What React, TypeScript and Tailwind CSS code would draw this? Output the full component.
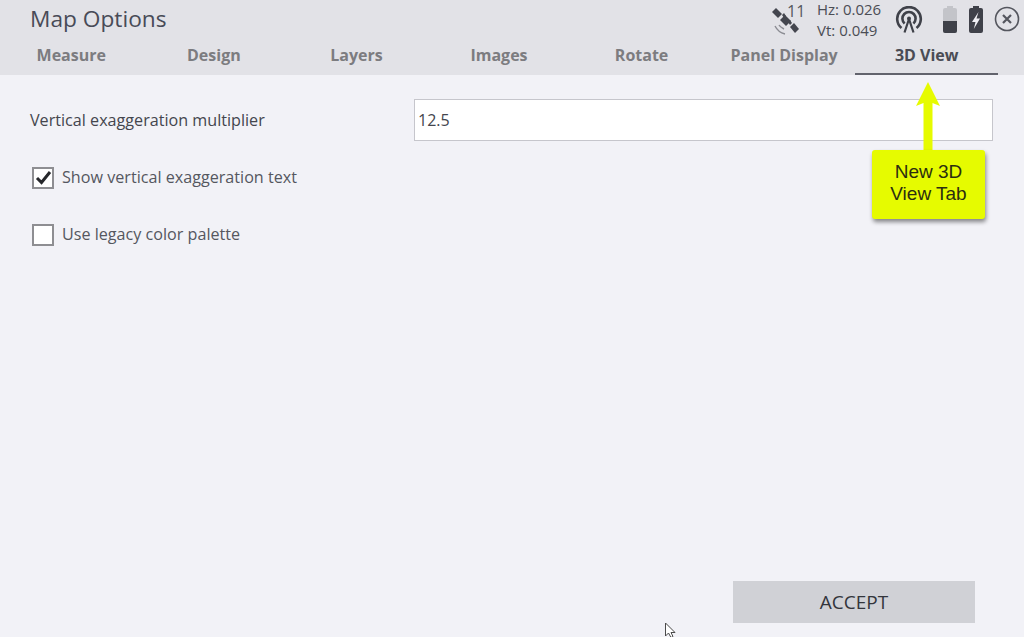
import React from 'react';

const tabs = ['Measure', 'Design', 'Layers', 'Images', 'Rotate', 'Panel Display', '3D View'];

const SatelliteIcon = () => (
  <svg width="30" height="30" viewBox="0 0 30 30" className="text-[#44464f]">
    <g fill="currentColor">
      <path d="M2 6 L6 2 L12 8 L8 12 Z" />
      <path d="M10 14 L15 9 L21 15 L16 20 Z" />
      <path d="M20 21 L24 17 L29 23 L25 27 Z" />
      <path d="M12 9 L14 7 L16 10 L14 12 Z" />
      <path d="M18 16 L20 14 L22 17 L20 19 Z" />
    </g>
    <g fill="none" stroke="#8b8c93" strokeWidth="1.4">
      <path d="M9 19 C10 21 12 22 14 23" />
      <path d="M5 20 C7 24 11 27 15 28" />
    </g>
  </svg>
);

const SignalIcon = () => (
  <svg width="28" height="28" viewBox="0 0 28 28" fill="none" stroke="#3f4149" strokeWidth="2.6">
    <path d="M6.5 22 A11.8 11.8 0 1 1 21.5 22" />
    <path d="M9.6 17.5 A6.6 6.6 0 1 1 18.4 17.5" />
    <circle cx="14" cy="12.5" r="2" fill="#3f4149" stroke="none" />
    <path d="M14 13 L9.5 26.5 M14 13 L18.5 26.5" strokeWidth="2.2" />
  </svg>
);

const BatteryLow = () => (
  <svg width="14" height="27" viewBox="0 0 14 27">
    <path d="M4 0 H10 V2 H12 Q14 2 14 4 V25 Q14 27 12 27 H2 Q0 27 0 25 V4 Q0 2 2 2 H4 Z" fill="#c3c4c9" />
    <path d="M0 15 H14 V25 Q14 27 12 27 H2 Q0 27 0 25 Z" fill="#3f4149" />
  </svg>
);

const BatteryCharging = () => (
  <svg width="14" height="27" viewBox="0 0 14 27">
    <path d="M4 0 H10 V2 H12 Q14 2 14 4 V25 Q14 27 12 27 H2 Q0 27 0 25 V4 Q0 2 2 2 H4 Z" fill="#3f4149" />
    <path d="M9.5 6 L3 16 H6.5 L4.8 23 L11 12.5 H7.5 Z" fill="#f0f0f4" />
  </svg>
);

const CloseIcon = () => (
  <svg width="26" height="26" viewBox="0 0 26 26" fill="none" stroke="#54565e">
    <circle cx="13" cy="13" r="11.5" strokeWidth="1.6" />
    <path d="M9 9 L17 17 M17 9 L9 17" strokeWidth="2.2" />
  </svg>
);

const Checkbox = ({ checked }: { checked?: boolean }) => (
  <div className="w-[22px] h-[22px] bg-white border-2 border-[#8e8e92] flex items-center justify-center">
    {checked && (
      <svg width="17" height="15" viewBox="0 0 17 15" fill="none" stroke="#26272b" strokeWidth="3">
        <path d="M2 8 L6.5 12.5 L15 2" />
      </svg>
    )}
  </div>
);

const App: React.FC = () => {
  return (
    <div className="relative w-[1024px] h-[637px] overflow-hidden bg-[#f2f2f7] font-['Open_Sans',sans-serif] text-[#3d3f47]">
      {/* Header */}
      <div className="h-[75px] bg-[#e2e2e7] flex flex-col">
        <div className="h-[41px] flex items-start justify-between pl-[30px] pr-[4px]">
          <div className="text-[22.7px] leading-[30px] mt-[4px] text-[#484b57]">Map Options</div>
          <div className="flex items-start">
            <div className="mt-[6px]">
              <SatelliteIcon />
            </div>
            <div className="text-[16px] leading-[16px] -ml-[13px] mt-[3px] w-[30px] text-[#55575e]">11</div>
            <div className="text-[15px] leading-[21px] text-[#4b4d55] w-[78px] -mt-[1px]">
              <div>Hz: 0.026</div>
              <div>Vt: 0.049</div>
            </div>
            <div className="mt-[6px]">
              <SignalIcon />
            </div>
            <div className="mt-[6px] ml-[20px]">
              <BatteryLow />
            </div>
            <div className="mt-[6px] ml-[12px]">
              <BatteryCharging />
            </div>
            <div className="mt-[6px] ml-[11px]">
              <CloseIcon />
            </div>
          </div>
        </div>
        <div className="w-[998px] grid grid-cols-7 h-[34px]">
          {tabs.map((t) => (
            <div
              key={t}
              className={`flex items-center justify-center text-[16px] font-bold pb-[5px] border-b-2 ${
                t === '3D View' ? 'text-[#4a4c55] border-[#62636d]' : 'text-[#7c7c80] border-transparent'
              }`}
            >
              {t}
            </div>
          ))}
        </div>
      </div>

      {/* Body */}
      <div className="pl-[30px] pr-[31px] pt-[24px]">
        <div className="flex items-center">
          <div className="w-[384px] text-[16.15px] text-[#44464e]">Vertical exaggeration multiplier</div>
          <div className="flex-1 h-[42px] bg-white border border-[#c6c6cc] flex items-center pl-[3px] text-[16px] text-[#44464e]">
            12.5
          </div>
        </div>
        <div className="flex items-center gap-[8px] mt-[25px] pl-[2px] text-[16.15px] text-[#55575f]">
          <Checkbox checked />
          <span className="-mt-[1px]">Show vertical exaggeration text</span>
        </div>
        <div className="flex items-center gap-[8px] mt-[34px] pl-[2px] text-[16.15px] text-[#55575f]">
          <Checkbox />
          <span className="-mt-[1px]">Use legacy color palette</span>
        </div>
      </div>

      {/* Accept */}
      <div className="absolute left-[733px] top-[581px] w-[242px] h-[42px] bg-[#d0d1d6] flex items-center justify-center text-[19px] text-[#33353c]">
        ACCEPT
      </div>

      {/* Callout */}
      <svg className="absolute left-[910px] top-[80px]" width="36" height="72" viewBox="0 0 36 72">
        <path d="M18 2 L30 26 L22.5 23 V72 H13.5 V23 L6 26 Z" fill="#e6fb00" />
      </svg>
      <div className="absolute left-[872px] top-[150px] w-[113px] h-[69px] pb-[4px] rounded-[3px] bg-[#e6fb00] shadow-[1px_3px_4px_rgba(0,0,0,0.45)] flex items-center justify-center text-center font-['Liberation_Sans',sans-serif] text-[19px] leading-[22px] text-[#2c2e10]">
        New 3D
        <br />
        View Tab
      </div>

      {/* Cursor */}
      <svg className="absolute left-[664px] top-[622px]" width="14" height="16" viewBox="0 0 14 16">
        <path d="M1.5 1 V14 L4.5 11 L7 15.5 L9 14.5 L7 10.5 H11 Z" fill="#fff" stroke="#4a4a4a" strokeWidth="1" />
      </svg>
    </div>
  );
};

export default App;
